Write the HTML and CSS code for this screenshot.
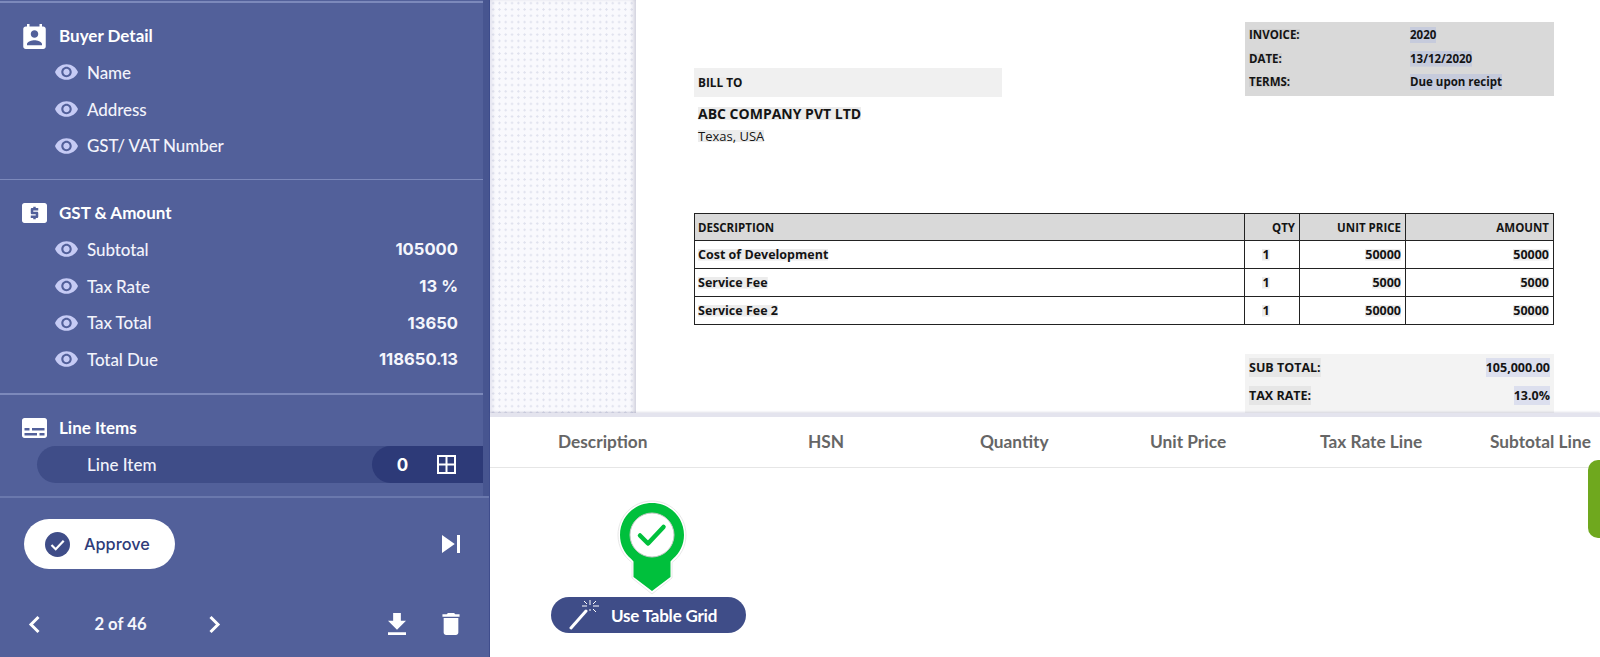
FILE: index.html
```html
<!DOCTYPE html>
<html lang="en">
<head>
<meta charset="utf-8">
<title>Invoice review</title>
<link rel="stylesheet" href="styles.css">
</head>
<body>
<div class="app">
  <aside class="sidebar">
    <div class="fields">
      <div class="fields-inner">
        <section class="group group-first">
          <div class="group-head">
            <span class="head-icon"><svg class="icon-buyer" viewBox="3 1 18 20"><path d="M19 3h-1V1h-2v2H8V1H6v2H5c-1.11 0-1.99.9-1.99 2L3 19c0 1.1.89 2 2 2h14c1.1 0 2-.9 2-2V5c0-1.1-.9-2-2-2zm-7 3c1.66 0 3 1.34 3 3s-1.34 3-3 3-3-1.34-3-3 1.34-3 3-3zm6 12H6v-1c0-2 4-3.1 6-3.1s6 1.1 6 3.1v1z"/></svg></span>
            <h2>Buyer Detail</h2>
          </div>
          <div class="row"><svg class="eye" viewBox="1 4.5 22 15"><path d="M12 4.5C7 4.5 2.73 7.61 1 12c1.73 4.39 6 7.5 11 7.5s9.27-3.11 11-7.5c-1.73-4.39-6-7.5-11-7.5zM12 17c-2.76 0-5-2.24-5-5s2.24-5 5-5 5 2.24 5 5-2.24 5-5 5zm0-8c-1.66 0-3 1.34-3 3s1.34 3 3 3 3-1.34 3-3-1.34-3-3-3z"/></svg><span class="label">Name</span></div>
          <div class="row"><svg class="eye" viewBox="1 4.5 22 15"><path d="M12 4.5C7 4.5 2.73 7.61 1 12c1.73 4.39 6 7.5 11 7.5s9.27-3.11 11-7.5c-1.73-4.39-6-7.5-11-7.5zM12 17c-2.76 0-5-2.24-5-5s2.24-5 5-5 5 2.24 5 5-2.24 5-5 5zm0-8c-1.66 0-3 1.34-3 3s1.34 3 3 3 3-1.34 3-3-1.34-3-3-3z"/></svg><span class="label">Address</span></div>
          <div class="row"><svg class="eye" viewBox="1 4.5 22 15"><path d="M12 4.5C7 4.5 2.73 7.61 1 12c1.73 4.39 6 7.5 11 7.5s9.27-3.11 11-7.5c-1.73-4.39-6-7.5-11-7.5zM12 17c-2.76 0-5-2.24-5-5s2.24-5 5-5 5 2.24 5 5-2.24 5-5 5zm0-8c-1.66 0-3 1.34-3 3s1.34 3 3 3 3-1.34 3-3-1.34-3-3-3z"/></svg><span class="label">GST/ VAT Number</span></div>
        </section>
        <section class="group group-amount">
          <div class="group-head">
            <span class="head-icon"><svg class="icon-wide" viewBox="2 4 20 16"><path fill-rule="evenodd" d="M11 17h2v-1h1c.55 0 1-.45 1-1v-3c0-.55-.45-1-1-1h-3v-1h4V8h-2V7h-2v1h-1c-.55 0-1 .45-1 1v3c0 .55.45 1 1 1h3v1H9v2h2v1zm9-13H4c-1.11 0-1.99.89-1.99 2L2 18c0 1.11.89 2 2 2h16c1.11 0 2-.89 2-2V6c0-1.11-.89-2-2-2z"/></svg></span>
            <h2>GST &amp; Amount</h2>
          </div>
          <div class="row"><svg class="eye" viewBox="1 4.5 22 15"><path d="M12 4.5C7 4.5 2.73 7.61 1 12c1.73 4.39 6 7.5 11 7.5s9.27-3.11 11-7.5c-1.73-4.39-6-7.5-11-7.5zM12 17c-2.76 0-5-2.24-5-5s2.24-5 5-5 5 2.24 5 5-2.24 5-5 5zm0-8c-1.66 0-3 1.34-3 3s1.34 3 3 3 3-1.34 3-3-1.34-3-3-3z"/></svg><span class="label">Subtotal</span><span class="value">105000</span></div>
          <div class="row"><svg class="eye" viewBox="1 4.5 22 15"><path d="M12 4.5C7 4.5 2.73 7.61 1 12c1.73 4.39 6 7.5 11 7.5s9.27-3.11 11-7.5c-1.73-4.39-6-7.5-11-7.5zM12 17c-2.76 0-5-2.24-5-5s2.24-5 5-5 5 2.24 5 5-2.24 5-5 5zm0-8c-1.66 0-3 1.34-3 3s1.34 3 3 3 3-1.34 3-3-1.34-3-3-3z"/></svg><span class="label">Tax Rate</span><span class="value">13 %</span></div>
          <div class="row"><svg class="eye" viewBox="1 4.5 22 15"><path d="M12 4.5C7 4.5 2.73 7.61 1 12c1.73 4.39 6 7.5 11 7.5s9.27-3.11 11-7.5c-1.73-4.39-6-7.5-11-7.5zM12 17c-2.76 0-5-2.24-5-5s2.24-5 5-5 5 2.24 5 5-2.24 5-5 5zm0-8c-1.66 0-3 1.34-3 3s1.34 3 3 3 3-1.34 3-3-1.34-3-3-3z"/></svg><span class="label">Tax Total</span><span class="value">13650</span></div>
          <div class="row"><svg class="eye" viewBox="1 4.5 22 15"><path d="M12 4.5C7 4.5 2.73 7.61 1 12c1.73 4.39 6 7.5 11 7.5s9.27-3.11 11-7.5c-1.73-4.39-6-7.5-11-7.5zM12 17c-2.76 0-5-2.24-5-5s2.24-5 5-5 5 2.24 5 5-2.24 5-5 5zm0-8c-1.66 0-3 1.34-3 3s1.34 3 3 3 3-1.34 3-3-1.34-3-3-3z"/></svg><span class="label">Total Due</span><span class="value">118650.13</span></div>
        </section>
        <section class="group group-last">
          <div class="group-head">
            <span class="head-icon"><svg class="icon-wide" viewBox="2 4 20 16"><path d="M20 4H4c-1.1 0-2 .9-2 2v12c0 1.1.9 2 2 2h16c1.1 0 2-.9 2-2V6c0-1.1-.9-2-2-2zM4 12h4v2H4v-2zm10 6H4v-2h10v2zm6 0h-4v-2h4v2zm0-4H10v-2h10v2z"/></svg></span>
            <h2>Line Items</h2>
          </div>
          <div class="line-pill">
            <span class="line-label">Line Item</span>
            <div class="line-count">
              <span class="count">0</span>
              <svg class="grid-icon" viewBox="0 0 19 19"><path d="M1 1h17v17H1zM9.500 1v17M1 9.500h17"/></svg>
            </div>
          </div>
        </section>
      </div>
      <div class="scrollbar"></div>
    </div>
    <div class="footer">
      <div class="approve-row">
        <button class="approve"><svg class="approve-icon" viewBox="0 0 25 25"><circle cx="12.500" cy="12.500" r="12.500"/><path d="M6.500 13l4.200 4.200 8-8.400"/></svg>Approve</button>
        <svg class="icon-white skip" viewBox="6 6 12 12"><path d="M6 18l8.500-6L6 6v12zM16 6v12h2V6h-2z"/></svg>
      </div>
      <div class="nav-row">
        <svg class="chevron" viewBox="0 0 14 19"><path d="M11.500 2L4 9.500l7.500 7.500"/></svg>
        <span class="pager">2 of 46</span>
        <svg class="chevron" viewBox="0 0 14 19"><path d="M2.500 2L10 9.500 2.500 17"/></svg>
        <span class="nav-space"></span>
        <svg class="icon-white download" viewBox="5 3 14 17"><path d="M19 9h-4V3H9v6H5l7 7 7-7zM5 18v2h14v-2H5z"/></svg>
        <svg class="icon-white trash" viewBox="5 3 14 18"><path d="M6 19c0 1.100.9 2 2 2h8c1.100 0 2-.9 2-2V7H6v12zM19 4h-3.500l-1-1h-5l-1 1H5v2h14V4z"/></svg>
      </div>
    </div>
  </aside>

  <main class="main">
    <div class="viewer">
      <div class="dots"></div>
      <div class="page">
        <div class="page-top">
          <div class="bill">
            <div class="bill-title"><span class="mark">BILL TO</span></div>
            <div class="bill-name"><span class="mark">ABC COMPANY PVT LTD</span></div>
            <div class="bill-place"><span class="mark">Texas, USA</span></div>
          </div>
          <div class="meta">
            <div class="meta-row"><span class="meta-key"><span class="mark">INVOICE:</span></span><span class="mark-blue">2020</span></div>
            <div class="meta-row"><span class="meta-key"><span class="mark">DATE:</span></span><span class="mark-blue">13/12/2020</span></div>
            <div class="meta-row"><span class="meta-key"><span class="mark">TERMS:</span></span><span class="mark-blue">Due upon recipt</span></div>
          </div>
        </div>
        <table class="items">
          <colgroup><col class="c1"><col class="c2"><col class="c3"><col class="c4"></colgroup>
          <thead>
            <tr><th class="left">DESCRIPTION</th><th>QTY</th><th>UNIT PRICE</th><th>AMOUNT</th></tr>
          </thead>
          <tbody>
            <tr><td class="left"><span class="mark">Cost of Development</span></td><td class="center"><span class="mark">1</span></td><td><span class="mark">50000</span></td><td><span class="mark">50000</span></td></tr>
            <tr><td class="left"><span class="mark">Service Fee</span></td><td class="center"><span class="mark">1</span></td><td><span class="mark">5000</span></td><td><span class="mark">5000</span></td></tr>
            <tr><td class="left"><span class="mark">Service Fee 2</span></td><td class="center"><span class="mark">1</span></td><td><span class="mark">50000</span></td><td><span class="mark">50000</span></td></tr>
          </tbody>
        </table>
        <div class="summary">
          <div class="summary-row"><span class="mark">SUB TOTAL:</span><span class="mark-blue">105,000.00</span></div>
          <div class="summary-row"><span class="mark">TAX RATE:</span><span class="mark-blue">13.0%</span></div>
        </div>
      </div>
    </div>

    <div class="panel">
      <div class="columns">
        <span class="col col-desc">Description</span>
        <span class="col col-hsn">HSN</span>
        <span class="col col-qty">Quantity</span>
        <span class="col col-price">Unit Price</span>
        <span class="col col-tax">Tax Rate Line</span>
        <span class="col col-sub">Subtotal Line</span>
      </div>
      <div class="panel-body">
        <svg class="pin" viewBox="0 0 72 95">
          <path class="pin-halo" d="M36 1C17.200 1 2 16.200 2 35c0 11.500 5.700 21.500 14 27.500V78l20 16 20-16V62.500C64.300 56.500 70 46.500 70 35 70 16.200 54.800 1 36 1z"/>
          <path class="pin-body" d="M36 3C18.300 3 4 17.300 4 35c0 9.500 4.200 18 11 23.800l2.500 2.700V77L36 91l18.500-14V61.500l2.500-2.700C63.800 53 68 44.500 68 35 68 17.300 53.700 3 36 3z"/>
          <circle class="pin-hole" cx="36" cy="35" r="22"/>
          <path class="pin-check" d="M24 35.500l8 8L47.500 27"/>
        </svg>
        <button class="grid-btn">
          <svg class="wand" viewBox="0 0 30 32">
            <path class="wand-stick" d="M2 29L17 12"/>
            <path class="wand-spark" d="M21 1v5M21 10v2M13 7h5M24 7h6M15 2l3 3M27 2l-3 3M24 10l3 3"/>
          </svg>
          Use Table Grid
        </button>
      </div>
      <div class="side-tab"></div>
    </div>
  </main>
</div>
</body>
</html>
```

FILE: styles.css
```css
* { box-sizing: border-box; }
html, body { margin: 0; height: 657px; overflow: hidden; background: #fff; }
body { font-family: Lato, "Liberation Sans", sans-serif; }
.app { display: flex; height: 657px; }

/* Sidebar */
.sidebar { width: 490px; flex: none; background: #52609a; color: #fff; display: flex; flex-direction: column; border-right: 1px solid #3d4c8c; }
.fields { height: 496px; display: flex; flex: none; }
.fields-inner { flex: 1; min-width: 0; padding-top: 1px; }
.scrollbar { width: 6px; background: #475590; }
.group { border-top: 1px solid #7c89bb; }
.group-first { height: 178px; border-top-width: 2px; padding-top: 15px; }
.group-amount { height: 214px; padding-top: 15px; }
.group-last { border-top-width: 2px; height: 103px; padding-top: 15px; }
.group-head { display: flex; align-items: center; height: 36px; padding-left: 22px; }
.head-icon { width: 25px; height: 26px; display: flex; align-items: center; justify-content: center; margin-right: 12px; fill: #fff; }
.icon-buyer { width: 23px; height: 25px; fill: #fff; }
.icon-wide { width: 25px; height: 20px; fill: #fff; }
.group-head h2 { margin: 0; font-size: 17px; font-weight: 700; line-height: 20px; }
.row { display: flex; align-items: center; height: 36.700px; padding: 0 25px 0 55px; }
.eye { width: 23px; height: 16px; fill: #c6cbf5; flex: none; }
.label { margin-left: 9px; font-size: 17px; font-weight: 500; color: #f2f3fb; letter-spacing: -.1px; }
.value { margin-left: auto; font-family: Inter, sans-serif; font-size: 16.600px; font-weight: 700; color: #f5f6fc; }
.line-pill { display: flex; align-items: center; height: 37px; margin-left: 37px; border-radius: 19px 0 0 19px; background: #3f4d88; }
.line-label { margin-left: 50px; font-size: 17px; font-weight: 500; color: #f2f3fb; }
.line-count { margin-left: auto; width: 111px; height: 37px; background: #2d3a78; border-radius: 19px 0 0 19px; display: flex; align-items: center; }
.count { margin-left: 24px; width: 13px; font-family: Inter, sans-serif; font-size: 17px; font-weight: 700; text-align: center; }
.grid-icon { width: 19px; height: 19px; margin-left: 28px; fill: none; stroke: #fff; stroke-width: 2; }

/* Footer */
.footer { flex: 1; border-top: 2px solid #6a78ad; padding: 21px 29px 0 24px; }
.approve-row { display: flex; align-items: center; justify-content: space-between; height: 50px; }
.approve { width: 151px; height: 50px; border: 0; border-radius: 25px; background: #fff; display: flex; align-items: center; gap: 14px; padding: 0 0 0 21px; color: #2f3c79; font-family: Inter, sans-serif; font-size: 16.300px; font-weight: 500; }
.approve-icon { width: 25px; height: 25px; flex: none; }
.approve-icon circle { fill: #3f4d88; }
.approve-icon path { fill: none; stroke: #fff; stroke-width: 2.200; }
.icon-white { fill: #fff; flex: none; }
.skip { width: 18px; height: 18px; }
.nav-row { display: flex; align-items: center; height: 24px; margin-top: 43px; padding-left: 3px; }
.chevron { width: 14px; height: 19px; fill: none; stroke: #fff; stroke-width: 3; flex: none; }
.pager { width: 167px; padding-right: 8px; text-align: center; font-family: Lato, sans-serif; font-size: 16.700px; font-weight: 700; color: #f5f6fc; }
.nav-space { flex: 1; }
.download { width: 18px; height: 22px; margin-right: 36px; }
.trash { width: 18px; height: 22px; }

/* Document viewer */
.main { flex: 1; min-width: 0; display: flex; flex-direction: column; }
.viewer { height: 413px; flex: none; display: flex; overflow: hidden; position: relative; }
.dots { width: 146px; flex: none; background-color: #f9f9fd; background-image: radial-gradient(circle, #e0e2ee 0.900px, transparent 1.300px); background-size: 6.300px 6.300px; box-shadow: inset -4px 0 4px -2px rgba(120,120,150,.35), inset 4px 0 4px -2px rgba(120,120,170,.18); }
.page { flex: 1; background: #fff; padding: 22px 48px 0 58px; font-family: "Open Sans", Lato, sans-serif; color: #141414; font-size: 11.800px; font-weight: 700; }
.page-top { display: flex; justify-content: space-between; align-items: flex-start; height: 191px; }
.bill { width: 308px; margin-top: 46px; }
.bill-title { height: 29px; background: #f0f0f0; padding-left: 4px; line-height: 29px; }
.bill-name { margin: 7px 0 0 4px; font-size: 14px; font-weight: 700; line-height: 20px; }
.bill-place { margin: 3px 0 0 4px; font-size: 13px; font-weight: 400; line-height: 19px; }
.mark, .mark-blue { background: linear-gradient(#ececec, #ececec) center / 100% 68% no-repeat; }
.mark-blue { background-image: linear-gradient(#c6cbdc, #c6cbdc); }
.meta { width: 309px; height: 74px; background: #d9d9d9; padding-top: 1px; font-size: 11.500px; }
.meta-row { display: flex; height: 23.700px; line-height: 23.700px; padding-left: 4px; }
.meta-key { width: 161px; }
.meta .mark { background-image: linear-gradient(#cfcfcf, #cfcfcf); }

.items { width: 859px; border-collapse: collapse; table-layout: fixed; font-size: 12.500px; }
.c1 { width: 550px; } .c2 { width: 55px; } .c3 { width: 106px; } .c4 { width: 148px; }
.items th, .items td { border: 1px solid #222; padding: 0 4px; text-align: right; height: 28px; font-weight: 700; }
.items td.left { padding-left: 3px; }
.items th { background: #d9d9d9; height: 27px; font-size: 11.500px; font-weight: 700; }
.items th.left { padding-left: 3px; }
.items .center { text-align: center; padding-left: 0; padding-right: 12px; }
.items .left { text-align: left; }
.summary { width: 309px; height: 62px; margin: 29px 0 0 auto; background: #f3f3f3; font-size: 12.500px; }
.summary-row { display: flex; justify-content: space-between; height: 28px; line-height: 28px; padding: 0 4px; }
.summary .mark { background-image: linear-gradient(#e6e6e6, #e6e6e6); }
.summary .mark-blue { background-image: linear-gradient(#dcdfee, #dcdfee); }

/* Bottom panel */
.panel { flex: 1; background: #fff; position: relative; border-top: 4px solid #e4e4ee; box-shadow: 0 -1px 2px rgba(100,100,140,.2); z-index: 1; }
.columns { height: 51px; padding-bottom: 2px; border-bottom: 1px solid #e6e6e6; display: flex; align-items: center; font-size: 17.300px; font-weight: 700; color: #666; }
.col { flex: none; white-space: nowrap; }
.col-desc { margin-left: 68px; width: 250px; }
.col-hsn { width: 172px; }
.col-qty { width: 170px; }
.col-price { width: 170px; }
.col-tax { width: 170px; }
.panel-body { padding: 32px 0 0 61px; display: flex; flex-direction: column; align-items: flex-start; }
.pin { width: 72px; height: 95px; margin-left: 65px; }
.pin-halo { fill: #fff; stroke: #e2e2e2; stroke-width: .8; }
.pin-body { fill: #00c03c; }
.pin-hole { fill: #fff; stroke: #c8c8c8; stroke-width: 1; }
.pin-check { fill: none; stroke: #00c03c; stroke-width: 4.500; stroke-linecap: round; stroke-linejoin: round; }
.grid-btn { width: 195px; height: 36px; margin-top: 2px; border: 0; border-radius: 18px; background: #3f4d88; color: #fff; display: flex; align-items: center; padding: 0 0 0 18px; font-family: Lato, sans-serif; font-size: 17px; font-weight: 700; letter-spacing: -.2px; gap: 12px; }
.wand { width: 30px; height: 32px; flex: none; }
.wand-stick { fill: none; stroke: #fff; stroke-width: 3; stroke-linecap: round; }
.wand-spark { fill: none; stroke: #fff; stroke-width: 1; }
.side-tab { position: absolute; right: 0; top: 43px; width: 12px; height: 78px; background: #6fa81e; border-radius: 10px 0 0 10px; }
```
